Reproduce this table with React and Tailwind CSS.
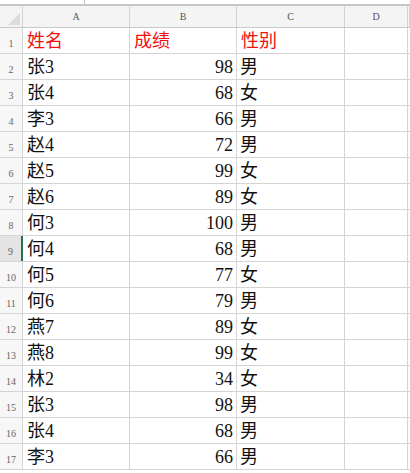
import React from 'react';

const rows = [
  ['张3', 98, '男'],
  ['张4', 68, '女'],
  ['李3', 66, '男'],
  ['赵4', 72, '男'],
  ['赵5', 99, '女'],
  ['赵6', 89, '女'],
  ['何3', 100, '男'],
  ['何4', 68, '男'],
  ['何5', 77, '女'],
  ['何6', 79, '男'],
  ['燕7', 89, '女'],
  ['燕8', 99, '女'],
  ['林2', 34, '女'],
  ['张3', 98, '男'],
  ['张4', 68, '男'],
  ['李3', 66, '男'],
];

const cellFont = { fontFamily: '"Liberation Serif", "Noto Sans CJK SC", serif' };
const grid = 'grid grid-cols-[23px_107px_107px_108px_63px_1fr]';

const App = () => {
  return (
    <div className="w-[410px] h-[473px] bg-white overflow-hidden">
      <div className="h-[4px] flex">
        <div className="w-[85px] border-r border-[#c8c8c8]" />
      </div>
      <div className="border-t-2 border-[#c6c6c6]" />

      {/* column header */}
      <div className={`${grid} h-[22px] bg-[#f4f4f4] border-b border-[#c8c8c8] text-[10px] text-[#555]`} style={cellFont}>
        <div className="relative border-r border-[#d4d4d4]">
          <svg className="absolute right-[2px] bottom-[2px]" width="12" height="12" viewBox="0 0 12 12">
            <polygon points="12,0 12,12 0,12" fill="#dcdcdc" />
          </svg>
        </div>
        {['A', 'B', 'C', 'D', ''].map((c, i) => (
          <div key={i} className="flex items-center justify-center border-r border-[#d4d4d4]">{c}</div>
        ))}
      </div>

      {/* header row */}
      <div className={`${grid} h-[26px] border-b border-[#d4d4d4] text-[18px] leading-none`} style={cellFont}>
        <div className="flex items-end justify-center pb-[4px] bg-[#f7f7f7] border-r border-[#d4d4d4] text-[10px] text-[#666]">1</div>
        <div className="flex items-center pl-[4px] border-r border-[#d4d4d4] text-[#f01010]">姓名</div>
        <div className="flex items-center pl-[4px] border-r border-[#d4d4d4] text-[#f01010]">成绩</div>
        <div className="flex items-center pl-[4px] border-r border-[#d4d4d4] text-[#f01010]">性别</div>
        <div className="border-r border-[#d4d4d4]" />
        <div />
      </div>

      {rows.map((r, i) => {
        const active = i + 2 === 9;
        return (
          <div key={i} className={`${grid} h-[26px] border-b border-[#d4d4d4] text-[18px] leading-none text-[#111]`} style={cellFont}>
            <div className={`flex items-end justify-center pb-[4px] border-r text-[10px] text-[#666] ${active ? 'bg-[#e4e4e4] border-[#217346] border-r-2' : 'bg-[#f7f7f7] border-[#d4d4d4]'}`}>{i + 2}</div>
            <div className="flex items-center pl-[4px] border-r border-[#d4d4d4]">{r[0]}</div>
            <div className="flex items-center justify-end pr-[3px] border-r border-[#d4d4d4]">{r[1]}</div>
            <div className="flex items-center pl-[3px] border-r border-[#d4d4d4]">{r[2]}</div>
            <div className="border-r border-[#d4d4d4]" />
            <div />
          </div>
        );
      })}
    </div>
  );
};

export default App;
